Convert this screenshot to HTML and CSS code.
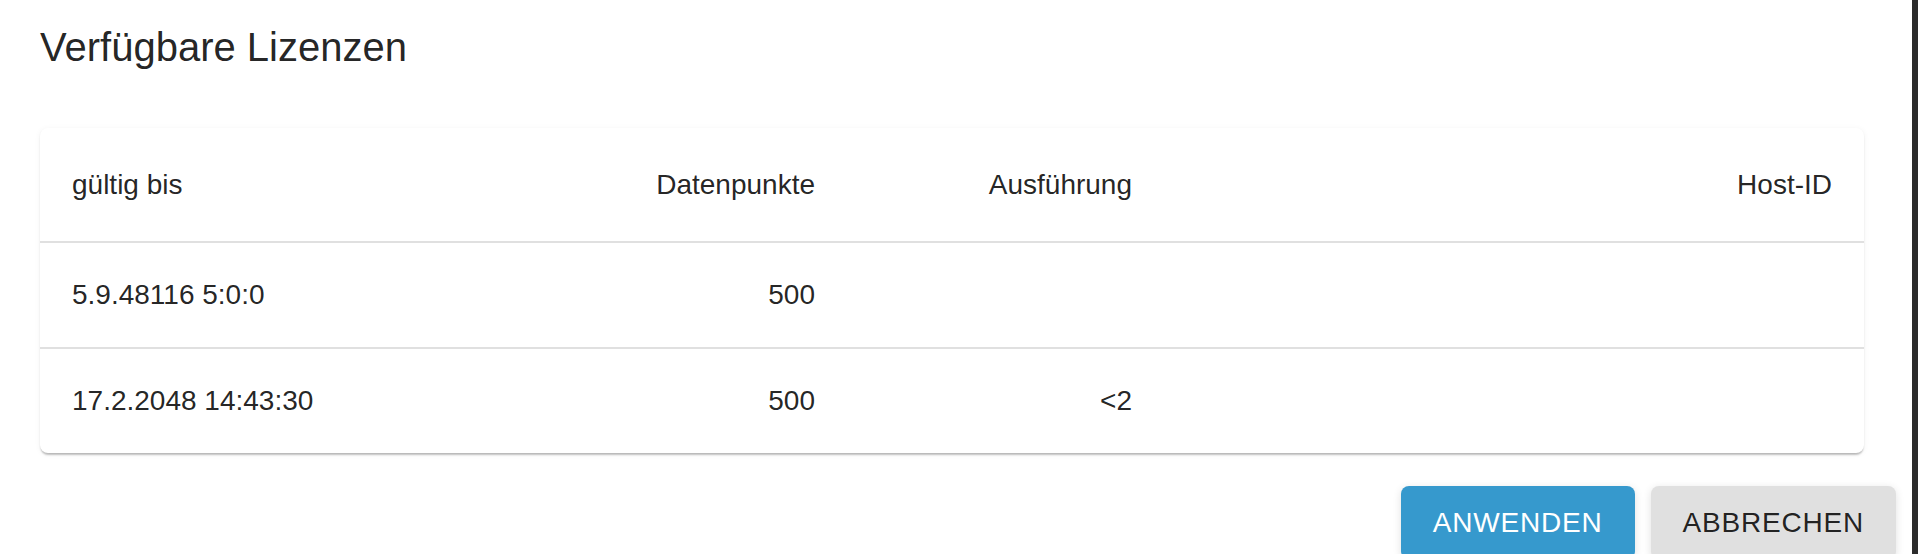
FILE: index.html
```html
<!DOCTYPE html>
<html lang="de">
<head>
<meta charset="utf-8">
<title>Verfügbare Lizenzen</title>
<link rel="stylesheet" href="styles.css">
</head>
<body>
<div class="window">
  <div class="dialog">
    <h2 class="title">Verfügbare Lizenzen</h2>
    <div class="card">
      <div class="row head">
        <div class="cell">gültig bis</div>
        <div class="cell num">Datenpunkte</div>
        <div class="cell num">Ausführung</div>
        <div class="cell num">Host-ID</div>
      </div>
      <div class="row">
        <div class="cell">5.9.48116 5:0:0</div>
        <div class="cell num">500</div>
        <div class="cell num"></div>
        <div class="cell num"></div>
      </div>
      <div class="row last">
        <div class="cell">17.2.2048 14:43:30</div>
        <div class="cell num">500</div>
        <div class="cell num">&lt;2</div>
        <div class="cell num"></div>
      </div>
    </div>
    <div class="actions">
      <button class="btn primary">Anwenden</button>
      <button class="btn secondary">Abbrechen</button>
    </div>
  </div>
  <div class="sidebar"></div>
</div>
</body>
</html>
```

FILE: styles.css
```css
html, body {
  margin: 0;
  padding: 0;
  background: #ffffff;
}

body {
  font-family: "Liberation Sans", Arial, Helvetica, sans-serif;
  color: rgba(0, 0, 0, 0.87);
}

.window {
  display: flex;
  width: 1918px;
  height: 554px;
  overflow: hidden;
}

.dialog {
  flex: 1;
  padding: 0 16px 0 40px;
  min-width: 0;
}

.title {
  margin: 0;
  padding-top: 23px;
  font-size: 40px;
  line-height: 48px;
  font-weight: 400;
  color: rgba(0, 0, 0, 0.87);
}

.card {
  margin-top: 57px;
  margin-right: 32px;
  background: #ffffff;
  border-radius: 8px;
  box-shadow: 0 3px 2px -1px rgba(0, 0, 0, 0.22),
              0 1px 2px 0 rgba(0, 0, 0, 0.06),
              0 1px 6px 0 rgba(0, 0, 0, 0.05);
  overflow: hidden;
}

.row {
  display: grid;
  grid-template-columns: 400px 407px 317px 1fr;
  align-items: center;
  height: 104px;
  border-bottom: 2px solid #e0e0e0;
  font-size: 28px;
  line-height: 32px;
}

.row.head {
  height: 113px;
}

.row.last {
  border-bottom: 0;
}

.cell {
  padding: 0 32px;
  white-space: nowrap;
}

.cell.num {
  text-align: right;
}

.actions {
  display: flex;
  justify-content: flex-end;
  gap: 16px;
  margin-top: 33px;
}

.btn {
  font-family: "Liberation Sans", Arial, Helvetica, sans-serif;
  font-size: 28px;
  line-height: 49px;
  letter-spacing: 0.8px;
  text-transform: uppercase;
  padding: 12px 32px;
  border: 0;
  border-radius: 8px;
  box-shadow: 0 2px 8px rgba(0, 0, 0, 0.12);
  cursor: pointer;
}

.btn.primary {
  background: #3699cd;
  color: #ffffff;
}

.btn.secondary {
  background: #e0e0e0;
  color: rgba(0, 0, 0, 0.87);
}

.sidebar {
  width: 6px;
  flex: 0 0 6px;
  background: #2b2b2b;
}
```
